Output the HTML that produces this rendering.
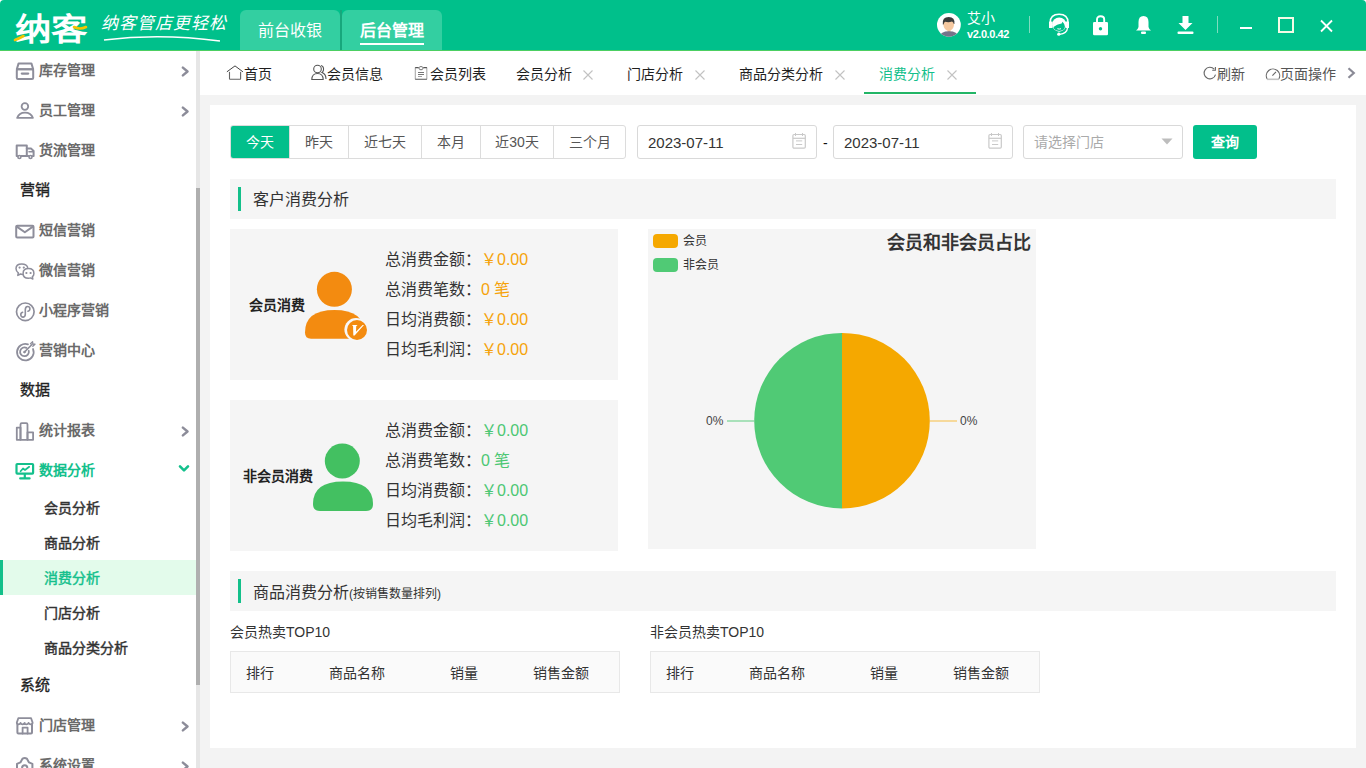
<!DOCTYPE html>
<html lang="zh-CN">
<head>
<meta charset="utf-8">
<style>
*{box-sizing:border-box;margin:0;padding:0}
html,body{width:1366px;height:768px;overflow:hidden;background:#f3f3f3;font-family:"Liberation Sans",sans-serif;color:#333}
.a{position:absolute;white-space:nowrap}
#hdr{position:absolute;left:0;top:0;width:1366px;height:51px;background:#00c08b;border-radius:4px 4px 0 0}
.htab{position:absolute;top:10px;height:40px;width:100px;background:#33cfa1;border-radius:6px 6px 0 0;color:#fff;font-size:16px;text-align:center;line-height:42px}
#side{position:absolute;left:0;top:51px;width:200px;height:717px;background:#fff}
.si{position:absolute;left:39px;font-size:14px;font-weight:bold;color:#6a6a6a;line-height:20px}
.sh{position:absolute;left:20px;font-size:15px;color:#222;-webkit-text-stroke:0.35px #222;line-height:20px}
.ss{position:absolute;left:44px;font-size:14px;color:#333;-webkit-text-stroke:0.45px #333;line-height:20px}
.chev{position:absolute;left:180px;width:9px;height:11px}
#tabs{position:absolute;left:200px;top:51px;width:1166px;height:44px;background:#fff}
.tb{position:absolute;top:12px;font-size:14px;color:#1e1e1e;line-height:20px}
.tx{position:absolute;top:17px;width:11px;height:11px}
#card{position:absolute;left:210px;top:105px;width:1146px;height:643px;background:#fff}
.btng{position:absolute;left:20px;top:20px;height:34px;border:1px solid #dcdcdc;border-radius:3px;display:flex;overflow:hidden}
.btng div{height:32px;line-height:32px;font-size:14px;color:#555;text-align:center;border-left:1px solid #dcdcdc}
.btng div:first-child{border-left:none;background:#02bf8b;color:#fff}
.inp{position:absolute;top:20px;height:34px;border:1px solid #d9d9d9;border-radius:3px;background:#fff}
.band{position:absolute;left:20px;width:1106px;height:40px;background:#f5f5f5}
.band .bar{position:absolute;left:8px;top:8px;width:3px;height:24px;background:#13c08a}
.band .t{position:absolute;left:23px;top:10px;font-size:16px;color:#333;line-height:22px}
.cc{position:absolute;left:20px;width:388px;height:151px;background:#f5f5f5}
.cl{position:absolute;left:155px;font-size:16px;color:#333;line-height:20px}
.cv{font-size:16px}
</style>
</head>
<body>
<!-- HEADER -->
<div class="a" style="left:0;top:0;width:1366px;height:20px;background:#fff"></div>
<div id="hdr">
  <div class="a" style="left:15px;top:10px;font-size:31px;font-weight:900;color:#fff;letter-spacing:0px;line-height:40px;transform:scaleX(1.17);transform-origin:0 0">纳客</div>
  <svg class="a" style="left:0;top:0" width="100" height="50" viewBox="0 0 100 50">
    <path d="M15 40 Q19 38.5 23.5 36" stroke="#f5c400" stroke-width="2.6" fill="none" stroke-linecap="round"/>
    <path d="M74 27 Q80 30 86 27" stroke="#f5c400" stroke-width="2.6" fill="none" stroke-linecap="round"/>
  </svg>
  <div class="a" style="left:101px;top:13px;font-size:17px;color:#fff;letter-spacing:1px;line-height:22px;font-style:italic;font-family:'Liberation Serif',serif">纳客管店更轻松</div>
  <svg class="a" style="left:100px;top:34px" width="125" height="10"><path d="M4 6 Q60 -1 120 7" stroke="#fff" stroke-width="1.5" fill="none"/></svg>
  <div class="htab" style="left:240px">前台收银</div>
  <div class="a" style="left:340px;top:10px;width:2px;height:40px;background:#17a77c"></div>
  <div class="a" style="left:0;top:50px;width:1366px;height:1px;background:#4ccf62;z-index:2"></div>
  <div class="htab" style="left:342px;font-weight:bold">后台管理</div>
  <div class="a" style="left:360px;top:43px;width:64px;height:2px;background:#fff"></div>
  <!-- avatar -->
  <svg class="a" style="left:936px;top:12px" width="26" height="26" viewBox="936 12 26 26">
    <circle cx="948.9" cy="24.8" r="11.9" fill="#fff"/>
    <clipPath id="avc"><circle cx="948.9" cy="24.8" r="11.9"/></clipPath>
    <g clip-path="url(#avc)">
      <rect x="947.6" y="28" width="2.9" height="4" fill="#eebf96"/>
      <path d="M939 38 Q939.8 31.2 949 31.2 Q958.2 31.2 959 38 Z" fill="#74748a"/>
      <path d="M943.3 23.5 Q943.2 20.5 948.7 20.5 Q954.2 20.5 954.1 23.5 Q954 28.8 950.8 30.2 Q948.7 31.2 946.6 30.2 Q943.4 28.8 943.3 23.5 Z" fill="#f5c8a0"/>
      <path d="M942.8 24.4 Q942 17.1 948.7 17.1 Q955.2 17.1 954.4 24 L953.8 24 Q953.6 22.2 952 21.6 Q948.6 22.6 945.2 21.8 Q943.8 22.4 943.6 24.4 Z" fill="#3b3b3b"/>
    </g>
  </svg>
  <div class="a" style="left:967px;top:9px;font-size:14px;color:#fff;line-height:18px">艾小</div>
  <div class="a" style="left:967px;top:28px;font-size:11px;font-weight:bold;color:#fff;line-height:12px;letter-spacing:-0.45px">v2.0.0.42</div>
  <div class="a" style="left:1029px;top:16px;width:1px;height:17px;background:#7fdcbf"></div>
  <!-- headset -->
  <svg class="a" style="left:1044px;top:10px" width="30" height="30" viewBox="1044 10 30 30">
    <path d="M1050.2 22.5 Q1050.2 14.3 1059.1 14.3 Q1068 14.3 1068 22.5" stroke="#fff" stroke-width="1.4" fill="none"/>
    <rect x="1049" y="21.4" width="3.6" height="6.6" rx="0.6" fill="#fff"/>
    <rect x="1065.6" y="21.4" width="3.4" height="6.6" rx="0.6" fill="#fff"/>
    <circle cx="1059.2" cy="24.6" r="7.1" fill="#fff"/>
    <path d="M1053.5 27 Q1056.8 24.6 1061.6 23.6 L1062.6 21.8 Q1064.6 24 1064.9 26.4 Q1065 30.6 1059.2 30.9 Q1053.7 30.7 1053.5 27 Z" fill="#00c08b"/>
    <path d="M1057.4 28.7 Q1059.2 29.5 1061 28.7" stroke="#fff" stroke-width="1" fill="none"/>
    <path d="M1067.6 27.6 Q1067 33.6 1059.6 34.3" stroke="#fff" stroke-width="1.3" fill="none"/>
    <circle cx="1058.8" cy="34.2" r="1.6" fill="#fff"/>
  </svg>
  <!-- lock -->
  <svg class="a" style="left:1090px;top:13px" width="22" height="24" viewBox="1090 13 22 24">
    <path d="M1097 23 V19.5 Q1097 16.3 1100.6 16.3 Q1104.2 16.3 1104.2 19.5 V23" stroke="#fff" stroke-width="1.9" fill="none"/>
    <rect x="1093" y="22" width="15" height="13.2" rx="1.3" fill="#fff"/>
    <circle cx="1100.5" cy="28.8" r="1.7" fill="#00c08b"/>
  </svg>
  <!-- bell -->
  <svg class="a" style="left:1135px;top:15px" width="17" height="20" viewBox="0 0 17 20">
    <path d="M8.5 1 Q13.5 1 13.5 7 V12 Q14 14 16 15.5 H1 Q3 14 3.5 12 V7 Q3.5 1 8.5 1Z" fill="#fff"/>
    <rect x="6" y="16.5" width="5" height="2.5" rx="1" fill="#fff"/>
  </svg>
  <!-- download -->
  <svg class="a" style="left:1177px;top:15px" width="17" height="20" viewBox="0 0 17 20">
    <path d="M5.5 1 H11.5 V8 H15.5 L8.5 15 L1.5 8 H5.5Z" fill="#fff"/>
    <rect x="0.5" y="16.5" width="16" height="2.5" rx="1" fill="#fff"/>
  </svg>
  <div class="a" style="left:1217px;top:16px;width:1px;height:17px;background:#7fdcbf"></div>
  <div class="a" style="left:1240px;top:27px;width:12px;height:2px;background:#fff"></div>
  <div class="a" style="left:1278px;top:17px;width:16px;height:16px;border:2px solid #f4fbe6"></div>
  <svg class="a" style="left:1320px;top:19px" width="13" height="14" viewBox="0 0 13 14">
    <path d="M1 1.5 L12 12.5 M12 1.5 L1 12.5" stroke="#fff" stroke-width="1.8"/>
  </svg>
</div>

<!-- SIDEBAR -->

<div id="side"></div>
<div class="a" style="left:196px;top:51px;width:4px;height:717px;background:#e6e6e6"></div>
<div class="a" style="left:196px;top:188px;width:4px;height:497px;background:#afafaf"></div>
<!-- sidebar icons -->
<svg class="a" style="left:12px;top:60px" width="26" height="24" viewBox="12 60 26 24" fill="none" stroke="#8e8e9b" stroke-width="2" stroke-linejoin="round" stroke-linecap="round"><path d="M16.8 69.3 L18.6 63.4 H31.4 L33.2 69.3 Z"/><rect x="16.8" y="69.3" width="16.4" height="9.6" rx="1.2"/><path d="M21.8 73.6 H28.2" stroke-width="2.2"/></svg>
<svg class="a" style="left:12px;top:100px" width="26" height="22" viewBox="12 100 26 22" fill="none" stroke="#8e8e9b" stroke-width="2" stroke-linejoin="round" stroke-linecap="round"><circle cx="24.9" cy="106.5" r="3.3" stroke-width="1.8"/><path d="M17.2 117.9 Q19 112.6 25 112.6 Q31 112.6 32.9 117.9 Z" stroke-width="1.8"/></svg>
<svg class="a" style="left:12px;top:141px" width="26" height="20" viewBox="12 141 26 20" fill="none" stroke="#8e8e9b" stroke-width="2" stroke-linejoin="round" stroke-linecap="round"><path d="M17.6 156 H16.7 V145.4 H26.8 V156 H21.3"/><path d="M26.8 148.6 H31.2 L33.6 151 V156 H32.6"/><path d="M28.4 156 H26.8"/><circle cx="19.4" cy="157" r="1.5" stroke-width="1.6"/><circle cx="30.5" cy="157" r="1.5" stroke-width="1.6"/><path d="M29 151.8 H33" stroke-width="1.6"/></svg>
<svg class="a" style="left:12px;top:222px" width="26" height="20" viewBox="12 222 26 20" fill="none" stroke="#8e8e9b" stroke-width="2" stroke-linejoin="round" stroke-linecap="round"><rect x="16.2" y="225.7" width="17.3" height="11.8" rx="1"/><path d="M16.8 226.6 L24.85 232.2 L32.9 226.6"/></svg>
<svg class="a" style="left:12px;top:261px" width="26" height="22" viewBox="12 261 26 22" fill="none" stroke="#8e8e9b" stroke-width="1.5" stroke-linejoin="round" stroke-linecap="round"><path d="M27.6 267.3 Q26.6 264 21.8 264 Q16 264 16 268.6 Q16 271.3 18.3 272.8 L17.8 275.4 L20.5 274 Q21.5 274.4 22.6 274.5"/><path d="M28.5 268.6 Q33.9 268.6 33.9 273.4 Q33.9 275.6 32.4 276.6 L32.8 279 L30.5 277.9 Q29.5 278.2 28.5 278.2 Q23.1 278.2 23.1 273.4 Q23.1 268.6 28.5 268.6 Z"/><circle cx="19.6" cy="267.6" r="0.5" stroke-width="1.2"/><circle cx="23.8" cy="267.6" r="0.5" stroke-width="1.2"/><circle cx="26.4" cy="273" r="0.5" stroke-width="1.2"/><circle cx="30.6" cy="273" r="0.5" stroke-width="1.2"/></svg>
<svg class="a" style="left:12px;top:300px" width="26" height="24" viewBox="12 300 26 24" fill="none" stroke="#8e8e9b" stroke-width="2" stroke-linejoin="round" stroke-linecap="round"><circle cx="25.3" cy="311.8" r="8.8" stroke-width="1.7"/><path d="M22.6 312.3 Q20.6 312.8 20.8 315 Q21.1 317.3 23.3 317.1 Q25.2 316.8 25.3 314.2 V309.6 Q25.4 306.7 27.5 306.5 Q29.7 306.4 29.9 308.6 Q30 310.7 28 311.2" stroke-width="1.6"/></svg>
<svg class="a" style="left:12px;top:340px" width="26" height="24" viewBox="12 340 26 24" fill="none" stroke="#8e8e9b" stroke-width="2" stroke-linejoin="round" stroke-linecap="round"><path d="M33 349 A8.3 8.3 0 1 1 28 344.3" stroke-width="1.8"/><path d="M28.8 351 A4.4 4.4 0 1 1 26.5 347.9" stroke-width="1.8"/><circle cx="24.4" cy="352.1" r="0.8" fill="#8e8e9b" stroke-width="1"/><path d="M24.4 352.1 L32 344.5" stroke-width="1.6"/><path d="M30.5 343.8 L32.6 341.8 L32.8 344 L35 344.2 L32.8 346.3" stroke-width="1.3"/></svg>
<svg class="a" style="left:12px;top:420px" width="26" height="24" viewBox="12 420 26 24" fill="none" stroke="#8e8e9b" stroke-width="1.8" stroke-linejoin="round" stroke-linecap="round"><path d="M16.8 439.8 V427.6 H20.5 V439.8 Z"/><path d="M20.5 439.8 V424.4 Q20.5 423.2 21.7 423.2 H26.3 Q27.5 423.2 27.5 424.4 V439.8 Z"/><path d="M27.5 439.8 V432.3 H33.1 V439.8 Z"/></svg>
<svg class="a" style="left:12px;top:460px" width="26" height="22" viewBox="12 460 26 22" fill="none" stroke="#14c08c" stroke-width="2" stroke-linejoin="round" stroke-linecap="round"><rect x="16.5" y="464" width="16.6" height="9.6" rx="0.8" stroke-width="2.2"/><path d="M20.6 471.3 L23 468.5 L25 470 L29.2 466.8" stroke-width="1.7"/><path d="M24.8 474 V477.7 M20.2 478.4 H29.6" stroke-width="2.2"/></svg>
<svg class="a" style="left:12px;top:715px" width="26" height="24" viewBox="12 715 26 24" fill="none" stroke="#8e8e9b" stroke-width="2" stroke-linejoin="round" stroke-linecap="round"><path d="M17.4 724.5 V732.6 Q17.4 733.6 18.4 733.6 H31 Q32 733.6 32 732.6 V724.5"/><path d="M16.8 722.6 L18.3 718.2 H31.1 L32.6 722.6 Q32.6 724.3 30.9 724.3 Q29.3 724.3 28.6 722.9 Q27.9 724.3 26.3 724.3 Q24.7 724.3 24.7 722.9 Q24.2 724.3 22.6 724.3 Q21 724.3 20.6 722.9 Q20 724.3 18.5 724.3 Q16.8 724.3 16.8 722.6Z" stroke-width="1.8"/><path d="M22.6 733.6 V727.6 H27.6 V733.6" stroke-width="1.8"/></svg>
<svg class="a" style="left:12px;top:755px" width="26" height="20" viewBox="12 755 26 20" fill="none" stroke="#8e8e9b" stroke-width="2" stroke-linejoin="round"><path d="M17 763.8 L20.4 762.4 L22.6 758.6 Q24.7 757.2 26.8 758.6 L29 762.4 L32.4 763.8 V775 H17 Z"/><circle cx="24.7" cy="767.8" r="2.6"/></svg>
<!-- sidebar text -->
<div class="si" style="top:60px">库存管理</div>
<div class="si" style="top:100px">员工管理</div>
<div class="si" style="top:140px">货流管理</div>
<div class="sh" style="top:180px">营销</div>
<div class="si" style="top:220px">短信营销</div>
<div class="si" style="top:260px">微信营销</div>
<div class="si" style="top:300px">小程序营销</div>
<div class="si" style="top:340px">营销中心</div>
<div class="sh" style="top:380px">数据</div>
<div class="si" style="top:420px">统计报表</div>
<div class="si" style="top:460px;color:#14c08c">数据分析</div>
<div class="ss" style="top:498px">会员分析</div>
<div class="ss" style="top:533px">商品分析</div>
<div class="a" style="left:0;top:560px;width:196px;height:35px;background:#e3fbeb"></div>
<div class="a" style="left:0;top:560px;width:3px;height:35px;background:#13c08a"></div>
<div class="ss" style="top:568px;color:#14c08c;-webkit-text-stroke:0.45px #14c08c">消费分析</div>
<div class="ss" style="top:603px">门店分析</div>
<div class="ss" style="top:638px">商品分类分析</div>
<div class="sh" style="top:675px">系统</div>
<div class="si" style="top:715px">门店管理</div>
<div class="si" style="top:755px">系统设置</div>
<svg class="chev" style="top:66px" viewBox="0 0 9 11"><path d="M2.9 1.6 L7.5 5.5 L2.9 9.4" stroke="#8c8c99" stroke-width="2.4" stroke-linecap="round" stroke-linejoin="round" fill="none"/></svg>
<svg class="chev" style="top:106px" viewBox="0 0 9 11"><path d="M2.9 1.6 L7.5 5.5 L2.9 9.4" stroke="#8c8c99" stroke-width="2.4" stroke-linecap="round" stroke-linejoin="round" fill="none"/></svg>
<svg class="chev" style="top:426px" viewBox="0 0 9 11"><path d="M2.9 1.6 L7.5 5.5 L2.9 9.4" stroke="#8c8c99" stroke-width="2.4" stroke-linecap="round" stroke-linejoin="round" fill="none"/></svg>
<svg class="a" style="left:176px;top:462px" width="16" height="12" viewBox="176 462 16 12"><path d="M180 466.4 L184 470.4 L188 466.4" stroke="#14c08c" stroke-width="2.6" stroke-linecap="round" stroke-linejoin="round" fill="none"/></svg>
<svg class="chev" style="top:721px" viewBox="0 0 9 11"><path d="M2.9 1.6 L7.5 5.5 L2.9 9.4" stroke="#8c8c99" stroke-width="2.4" stroke-linecap="round" stroke-linejoin="round" fill="none"/></svg>
<svg class="chev" style="top:761px" viewBox="0 0 9 11"><path d="M2.9 1.6 L7.5 5.5 L2.9 9.4" stroke="#8c8c99" stroke-width="2.4" stroke-linecap="round" stroke-linejoin="round" fill="none"/></svg>


<!-- TABS -->

<div id="tabs"></div>
<svg class="a" style="left:226px;top:64px" width="18" height="17" viewBox="226 64 18 17" fill="none" stroke="#444" stroke-width="1" stroke-linecap="round">
  <path d="M227.2 71.6 L235 65.9 L242.6 71.6"/><path d="M229.5 72.2 V78.8 Q229.5 79.3 230 79.3 H240.1 Q240.6 79.3 240.6 78.8 V72.2" stroke="#666" stroke-width="1.1"/>
</svg>
<div class="tb" style="left:244px;top:64px">首页</div>
<svg class="a" style="left:311px;top:64px" width="16" height="16" viewBox="0 0 16 16" fill="none" stroke="#555" stroke-width="1.1">
  <circle cx="6.5" cy="5" r="3.8"/><path d="M0.8 15.5 Q1 9.5 6.5 9.5 Q12 9.5 12.2 15.5 Z"/><path d="M10 1.5 Q13 2.5 12.5 6 Q12 8 11 8.5 Q15 10 15 15"/>
</svg>
<div class="tb" style="left:327px;top:64px">会员信息</div>
<svg class="a" style="left:413px;top:64px" width="16" height="17" viewBox="413 64 16 17" fill="none" stroke-width="1">
  <path d="M415.3 67.6 V79.2 M426.8 67.6 V79.2" stroke="#aaa" stroke-width="1.1"/><path d="M415.2 67.6 H418.6 M423.4 67.6 H426.9 M415.2 79.3 H426.9" stroke="#555" stroke-width="1.1"/>
  <path d="M418.6 67.6 L419.8 69.7 H422.2 L423.4 67.6 Q421 65.2 418.6 67.6 Z" stroke="#666" stroke-width="0.9"/>
  <path d="M418 72.5 H424 M418 74.5 H424" stroke="#666" stroke-width="0.9"/><path d="M418 76.5 H422" stroke="#999" stroke-width="0.9"/>
</svg>
<div class="tb" style="left:430px;top:64px">会员列表</div>
<div class="tb" style="left:516px;top:64px">会员分析</div>
<svg class="a" style="left:583px;top:70px" width="10" height="10" viewBox="0 0 10 10"><path d="M0.5 0.5 L9.5 9.5 M9.5 0.5 L0.5 9.5" stroke="#c2c2c2" stroke-width="1.1"/></svg>
<div class="tb" style="left:627px;top:64px">门店分析</div>
<svg class="a" style="left:695px;top:70px" width="10" height="10" viewBox="0 0 10 10"><path d="M0.5 0.5 L9.5 9.5 M9.5 0.5 L0.5 9.5" stroke="#c2c2c2" stroke-width="1.1"/></svg>
<div class="tb" style="left:739px;top:64px">商品分类分析</div>
<svg class="a" style="left:835px;top:70px" width="10" height="10" viewBox="0 0 10 10"><path d="M0.5 0.5 L9.5 9.5 M9.5 0.5 L0.5 9.5" stroke="#c2c2c2" stroke-width="1.1"/></svg>
<div class="tb" style="left:879px;top:64px;color:#14c08c">消费分析</div>
<svg class="a" style="left:947px;top:70px" width="10" height="10" viewBox="0 0 10 10"><path d="M0.5 0.5 L9.5 9.5 M9.5 0.5 L0.5 9.5" stroke="#c2c2c2" stroke-width="1.1"/></svg>
<div class="a" style="left:864px;top:92px;width:112px;height:2px;background:#22b566"></div>
<svg class="a" style="left:1202px;top:65px" width="16" height="16" viewBox="1202 65 16 16" fill="none" stroke="#666" stroke-width="1.1">
  <path d="M1214.2 69.2 A5.8 5.8 0 1 0 1215.5 74.6"/><path d="M1215.4 67 V70.3 H1212.2"/>
</svg>
<div class="tb" style="left:1217px;top:64px;color:#555">刷新</div>
<svg class="a" style="left:1264px;top:66px" width="18" height="16" viewBox="1264 66 18 16" fill="none" stroke="#666" stroke-width="1.1">
  <path d="M1267.2 79 A6.7 6.7 0 1 1 1278.8 79"/><path d="M1267 79.3 H1279" stroke="#c4c4c4" stroke-width="1.6"/><path d="M1272.4 75.6 L1276 71.9"/>
</svg>
<div class="tb" style="left:1280px;top:64px;color:#555">页面操作</div>
<svg class="a" style="left:1347px;top:67px" width="9" height="12" viewBox="0 0 9 12"><path d="M1.5 1.2 L6.8 6 L1.5 10.8" stroke="#8a8a96" stroke-width="2.2" fill="none"/></svg>


<!-- CARD -->

<div id="card"></div>
<div class="btng" style="left:230px;top:125px"><div style="width:58px">今天</div><div style="width:59px">昨天</div><div style="width:73px">近七天</div><div style="width:59px">本月</div><div style="width:73px">近30天</div><div style="width:72px">三个月</div></div>
<div class="inp" style="left:637px;width:180px;top:125px"></div>
<div class="a" style="left:648px;top:134px;font-size:15px;color:#333;line-height:18px">2023-07-11</div>
<svg class="a" style="left:792px;top:132px" width="16" height="18" viewBox="0 0 16 18" fill="none" stroke="#c9c9c9" stroke-width="1.2"><rect x="0.9" y="2.5" width="12.4" height="13.6" rx="1.2"/><path d="M0.9 6.3 H13.3"/><path d="M3.5 1 V4 M10.5 1 V4 M4 8.9 H10.2 M4 12.5 H10.2" stroke-width="1"/></svg>
<div class="a" style="left:823px;top:134px;font-size:14px;color:#111;line-height:18px">-</div>
<div class="inp" style="left:833px;width:180px;top:125px"></div>
<div class="a" style="left:844px;top:134px;font-size:15px;color:#333;line-height:18px">2023-07-11</div>
<svg class="a" style="left:988px;top:132px" width="16" height="18" viewBox="0 0 16 18" fill="none" stroke="#c9c9c9" stroke-width="1.2"><rect x="0.9" y="2.5" width="12.4" height="13.6" rx="1.2"/><path d="M0.9 6.3 H13.3"/><path d="M3.5 1 V4 M10.5 1 V4 M4 8.9 H10.2 M4 12.5 H10.2" stroke-width="1"/></svg>
<div class="inp" style="left:1023px;width:160px;top:125px"></div>
<div class="a" style="left:1034px;top:132px;font-size:14px;color:#aaa;line-height:20px">请选择门店</div>
<svg class="a" style="left:1161px;top:138px" width="12" height="7" viewBox="0 0 12 7"><path d="M0.5 0.5 H11.5 L6 6.5Z" fill="#bdbdbd"/></svg>
<div class="a" style="left:1193px;top:125px;width:64px;height:34px;background:#02bf8b;border-radius:3px;color:#fff;font-size:14px;font-weight:bold;text-align:center;line-height:34px">查询</div>

<div class="band" style="left:230px;top:179px"><div class="bar"></div><div class="t">客户消费分析</div></div>

<div class="cc" style="left:230px;top:229px"></div>
<div class="a" style="left:249px;top:295px;font-size:14px;font-weight:bold;color:#222;line-height:20px">会员消费</div>
<svg class="a" style="left:300px;top:268px" width="70" height="76" viewBox="300 268 70 76">
  <circle cx="334.4" cy="289.3" r="17.5" fill="#f38b10"/>
  <path d="M305 332.5 Q305 310 334.5 310 Q364 310 364 332.5 Q364 338.7 357 338.7 H311 Q305 338.7 305 332.5Z" fill="#f38b10"/>
  <circle cx="356" cy="329.6" r="11.6" fill="#f7f7f7"/>
  <circle cx="357" cy="330" r="10" fill="#f38b10"/>
  <path d="M352 325 H357.6 L356.2 326.2 L356 331.8 L362.6 325.1 H364 L354.6 335.4 H353.3 L353.1 326.3 Z" fill="#fff"/>
</svg>
<div class="cl" style="left:385px;top:250px">总消费金额：<span style="color:#f5a30a">￥0.00</span></div>
<div class="cl" style="left:385px;top:280px">总消费笔数：<span style="color:#f5a30a">0 笔</span></div>
<div class="cl" style="left:385px;top:310px">日均消费额：<span style="color:#f5a30a">￥0.00</span></div>
<div class="cl" style="left:385px;top:340px">日均毛利润：<span style="color:#f5a30a">￥0.00</span></div>

<div class="cc" style="left:230px;top:400px"></div>
<div class="a" style="left:243px;top:466px;font-size:14px;font-weight:bold;color:#222;line-height:20px">非会员消费</div>
<svg class="a" style="left:305px;top:440px" width="75" height="75" viewBox="305 440 75 75">
  <circle cx="342.3" cy="461" r="17.5" fill="#43c061"/>
  <path d="M313 504 Q313 481.6 343 481.6 Q373 481.6 373 504 Q373 511 366 511 H320 Q313 511 313 504Z" fill="#43c061"/>
</svg>
<div class="cl" style="left:385px;top:421px">总消费金额：<span style="color:#4cc773">￥0.00</span></div>
<div class="cl" style="left:385px;top:451px">总消费笔数：<span style="color:#4cc773">0 笔</span></div>
<div class="cl" style="left:385px;top:481px">日均消费额：<span style="color:#4cc773">￥0.00</span></div>
<div class="cl" style="left:385px;top:511px">日均毛利润：<span style="color:#4cc773">￥0.00</span></div>

<div class="a" style="left:648px;top:229px;width:388px;height:320px;background:#f5f5f5"></div>
<div class="a" style="left:653px;top:234px;width:25px;height:14px;border-radius:4px;background:#f5a800"></div>
<div class="a" style="left:653px;top:258px;width:25px;height:14px;border-radius:4px;background:#50ca75"></div>
<div class="a" style="left:683px;top:233px;font-size:12px;color:#333;line-height:17px">会员</div>
<div class="a" style="left:683px;top:257px;font-size:12px;color:#333;line-height:17px">非会员</div>
<div class="a" style="left:887px;top:231px;font-size:18px;font-weight:bold;color:#333;line-height:24px">会员和非会员占比</div>
<svg class="a" style="left:648px;top:229px" width="388" height="320" viewBox="648 229 388 320">
  <path d="M842 332.9 A87.8 87.8 0 0 1 842 508.5 Z" fill="#f5a800"/>
  <path d="M842 332.9 A87.8 87.8 0 0 0 842 508.5 Z" fill="#50ca75"/>
  <path d="M727 421 H754" stroke="#8fdaa6" stroke-width="1.5"/>
  <path d="M930 421 H957" stroke="#f6cf7c" stroke-width="1.5"/>
</svg>
<div class="a" style="left:706px;top:413px;font-size:12px;color:#444;line-height:17px">0%</div>
<div class="a" style="left:960px;top:413px;font-size:12px;color:#444;line-height:17px">0%</div>

<div class="band" style="left:230px;top:571px"><div class="bar"></div><div class="t" style="top:10.5px">商品消费分析<span style="font-size:12px">(按销售数量排列)</span></div></div>
<div class="a" style="left:230px;top:622px;font-size:14px;color:#333;line-height:20px">会员热卖TOP10</div>
<div class="a" style="left:650px;top:622px;font-size:14px;color:#333;line-height:20px">非会员热卖TOP10</div>
<div class="a" style="left:230px;top:651px;width:390px;height:42px;background:#fafafa;border:1px solid #e8e8e8"></div>
<div class="a" style="left:650px;top:651px;width:390px;height:42px;background:#fafafa;border:1px solid #e8e8e8"></div>
<div class="a" style="left:246px;top:663px;font-size:14px;color:#333;line-height:20px">排行</div>
<div class="a" style="left:329px;top:663px;font-size:14px;color:#333;line-height:20px">商品名称</div>
<div class="a" style="left:450px;top:663px;font-size:14px;color:#333;line-height:20px">销量</div>
<div class="a" style="left:533px;top:663px;font-size:14px;color:#333;line-height:20px">销售金额</div>
<div class="a" style="left:666px;top:663px;font-size:14px;color:#333;line-height:20px">排行</div>
<div class="a" style="left:749px;top:663px;font-size:14px;color:#333;line-height:20px">商品名称</div>
<div class="a" style="left:870px;top:663px;font-size:14px;color:#333;line-height:20px">销量</div>
<div class="a" style="left:953px;top:663px;font-size:14px;color:#333;line-height:20px">销售金额</div>

</body>
</html>
